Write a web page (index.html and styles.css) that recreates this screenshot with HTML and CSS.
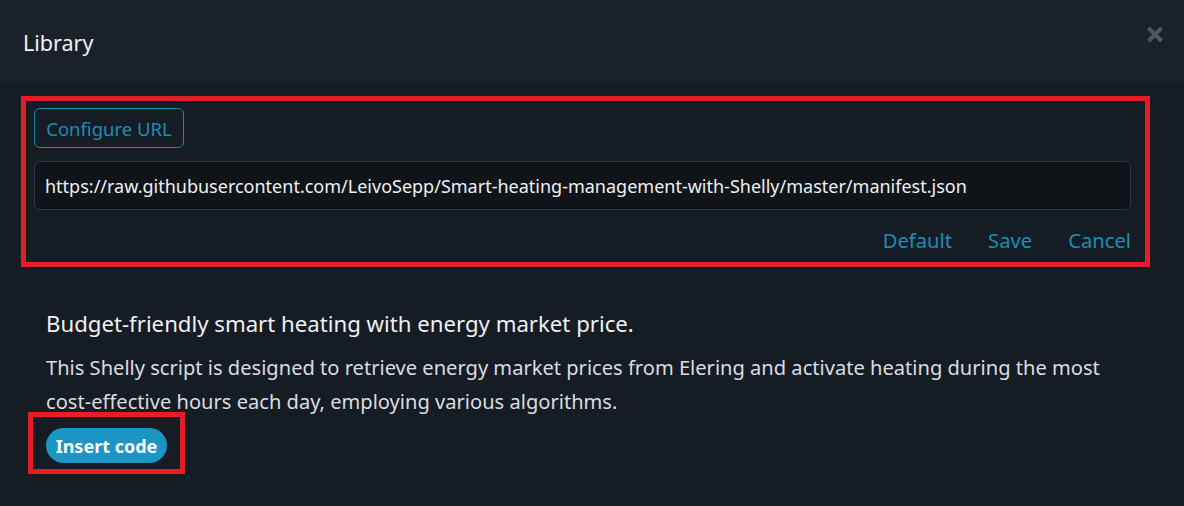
FILE: index.html
```html
<!DOCTYPE html>
<html>
<head>
<meta charset="utf-8">
<link rel="stylesheet" href="styles.css">
</head>
<body>
<div class="modal">
  <div class="header">
    <h1 class="title">Library</h1>
    <svg class="close" width="18" height="17" viewBox="0 0 18 17"><path d="M2.5 2 L15.5 15 M15.5 2 L2.5 15" stroke="#4a5663" stroke-width="4" stroke-linecap="butt"/></svg>
  </div>
  <div class="body">
    <div class="url-box">
      <button class="btn-outline">Configure URL</button>
      <div class="input">https://raw.githubusercontent.com/LeivoSepp/Smart-heating-management-with-Shelly/master/manifest.json</div>
      <div class="links">
        <a class="link">Default</a>
        <a class="link">Save</a>
        <a class="link">Cancel</a>
      </div>
    </div>
    <div class="item">
      <h2 class="item-title">Budget-friendly smart heating with energy market price.</h2>
      <p class="item-desc">This Shelly script is designed to retrieve energy market prices from Elering and activate heating during the most cost-effective hours each day, employing various algorithms.</p>
      <div class="insert-wrap">
        <button class="btn-pill">Insert code</button>
      </div>
    </div>
  </div>
</div>
</body>
</html>
```

FILE: styles.css
```css
* { box-sizing: border-box; }
html, body { margin: 0; padding: 0; }
body {
  background: #161c23;
  font-family: "Noto Sans", "Open Sans", sans-serif;
  color: #e6e9ec;
  width: 1184px;
  height: 506px;
  overflow: hidden;
}
.header {
  height: 82px;
  background: #1b2129;
  display: flex;
  align-items: flex-start;
  justify-content: space-between;
  padding: 0 20px 0 23px;
}
.title {
  margin: 28px 0 0;
  font-size: 21.5px;
  line-height: 30px;
  font-weight: 400;
  color: #f0f2f4;
}
.close {
  display: block;
  margin-top: 26px;
}
.body {
  padding: 14px 34px 0 21px;
}
.url-box {
  border: 5px solid #e41e26;
  padding: 7px 14px 9px 8px;
  display: flex;
  flex-direction: column;
  align-items: flex-start;
}
.btn-outline {
  font-family: inherit;
  background: transparent;
  border: 1px solid #1a86ad;
  border-radius: 6px;
  color: #1a8dba;
  font-size: 18.5px;
  height: 40px;
  width: 150px;
  padding: 0;
}
.input {
  margin-top: 13px;
  width: 100%;
  height: 49px;
  background: #101419;
  border: 1px solid #2e3640;
  border-radius: 6px;
  display: flex;
  align-items: center;
  padding: 0 10px;
  font-size: 18px;
  color: #eef0f2;
  white-space: nowrap;
}
.links {
  align-self: stretch;
  display: flex;
  justify-content: flex-end;
  gap: 36px;
  margin-top: 17px;
  height: 26px;
  align-items: center;
}
.link {
  color: #1a8dba;
  font-size: 20.2px;
  line-height: 26px;
}
.item {
  padding: 42px 20px 0 25px;
}
.item-title {
  margin: 0;
  font-size: 22.2px;
  font-weight: 400;
  color: #eef0f2;
  line-height: 30px;
}
.item-desc {
  margin: 12px 0 0;
  font-size: 20.1px;
  line-height: 34px;
  color: #d9dde1;
}
.insert-wrap {
  display: inline-flex;
  margin: -7px 0 0 -18px;
  border: 5px solid #e41e26;
  padding: 11px 13px 6px 13px;
}
.btn-pill {
  font-family: inherit;
  background: #1a95c4;
  color: #ffffff;
  border: none;
  border-radius: 18px;
  height: 35px;
  width: 121px;
  padding: 0;
  font-size: 18px;
  font-weight: 700;
}
```
